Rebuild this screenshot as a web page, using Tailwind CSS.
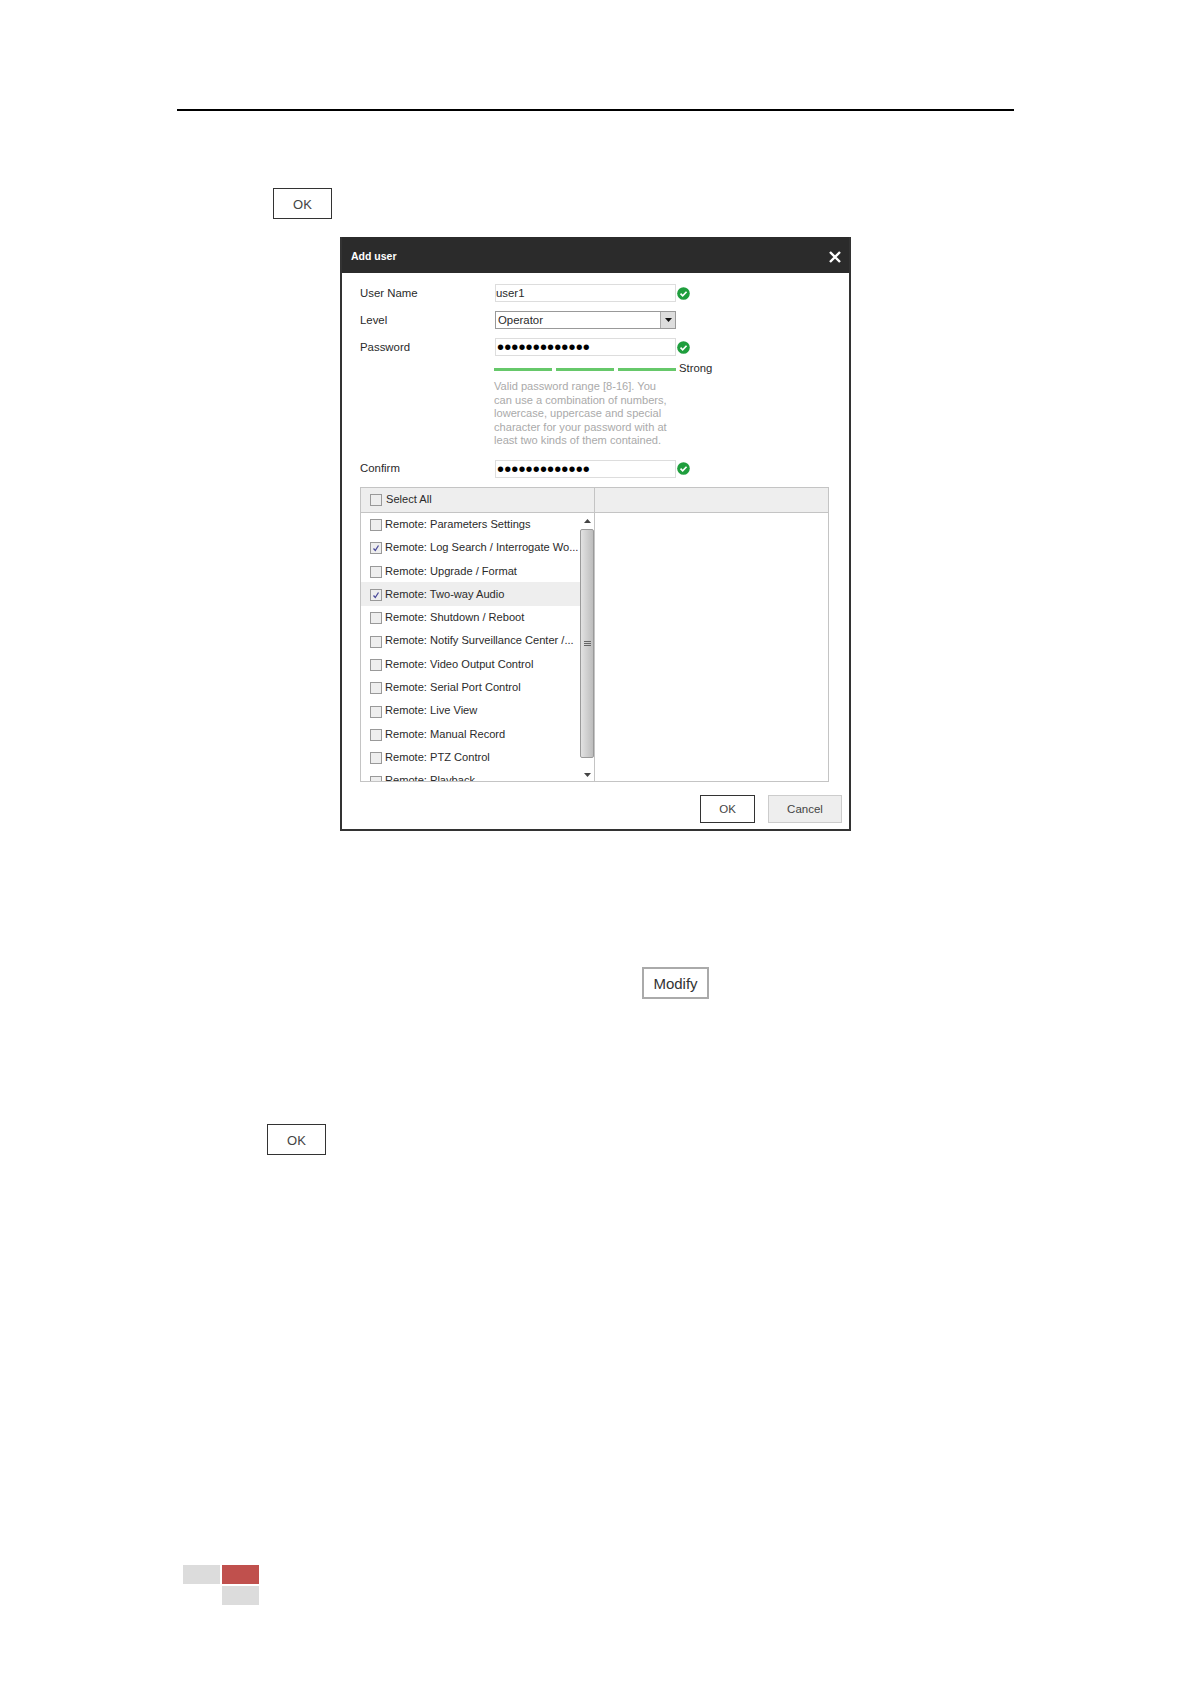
<!DOCTYPE html>
<html lang="en">
<head>
  <meta charset="UTF-8" />
  <title>Add user</title>
  <script src="https://cdn.jsdelivr.net/npm/@tailwindcss/browser@4"></script>
</head>
<body class="bg-white font-['Liberation_Sans',Arial,sans-serif] text-[#2a2a2a]">
  <div class="w-[1191px] h-[1684px] overflow-hidden pt-[109px]">
    <!-- header rule -->
    <div class="ml-[177px] w-[837px] h-[2px] bg-black"></div>

    <button class="block mt-[77px] ml-[273px] w-[59px] h-[31px] pt-[2px] border border-[#333] text-[13px] text-[#444]">OK</button>

    <!-- dialog -->
    <div class="mt-[18px] ml-[340px] w-[511px] h-[594px] border-2 border-[#333] border-t-0 bg-white">
      <div class="h-[36px] pt-[3px] bg-[#2b2b2b] flex items-center justify-between pl-[9px] pr-[8px]">
        <span class="text-[10.5px] font-bold text-white">Add user</span>
        <svg class="w-[12px] h-[12px]" viewBox="0 0 12 12" fill="none" stroke="#fff" stroke-width="2.4"><path d="M1 1l10 10M11 1L1 11" /></svg>
      </div>

      <div class="pl-[18px] pt-[11px]">
        <div class="flex items-center h-[18px] text-[11.4px]">
          <span class="w-[135px] pt-[2px]">User Name</span>
          <div class="w-[181px] h-[18px] border border-[#ddd] leading-[17px]">user1</div>
          <svg class="ml-[1px] w-[13px] h-[13px]" viewBox="0 0 14 14"><circle cx="7" cy="7" r="6.8" fill="#1f9e3d" /><path d="M3.8 7.2l2.3 2.3 4.2-4.4" fill="none" stroke="#fff" stroke-width="1.8" /></svg>
        </div>
        <div class="flex items-center h-[18px] mt-[9px] text-[11.4px]">
          <span class="w-[135px] pt-[2px]">Level</span>
          <div class="w-[181px] h-[18px] border border-[#999] flex items-center justify-between pl-[2px]">
            <span class="pt-[1px]">Operator</span>
            <span class="w-[15px] h-[16px] bg-[#ddd] border-l border-[#aaa] flex items-center justify-center">
              <svg class="w-[7px] h-[4px]" viewBox="0 0 7 4"><path d="M0 0h7L3.5 4z" fill="#111" /></svg>
            </span>
          </div>
        </div>
        <div class="flex items-center h-[18px] mt-[9px] text-[11.4px]">
          <span class="w-[135px] pt-[2px]">Password</span>
          <div class="w-[181px] h-[18px] border border-[#ddd] pl-[1px] text-[20px] leading-[16px] tracking-[0.15px] text-black">•••••••••••••</div>
          <svg class="ml-[1px] w-[13px] h-[13px]" viewBox="0 0 14 14"><circle cx="7" cy="7" r="6.8" fill="#1f9e3d" /><path d="M3.8 7.2l2.3 2.3 4.2-4.4" fill="none" stroke="#fff" stroke-width="1.8" /></svg>
        </div>

        <!-- strength meter -->
        <div class="flex items-center h-[14px] mt-[6px] ml-[134px] text-[11.3px]">
          <span class="w-[58px] h-[3px] bg-[#66c86a]"></span>
          <span class="w-[58px] h-[3px] bg-[#66c86a] ml-[4px]"></span>
          <span class="w-[58px] h-[3px] bg-[#66c86a] ml-[4px]"></span>
          <span class="ml-[3px] -mt-[1px]">Strong</span>
        </div>
        <p class="mt-[4px] ml-[134px] text-[11.1px] leading-[13.5px] text-[#aaa] whitespace-nowrap">Valid password range [8-16]. You<br />can use a combination of numbers,<br />lowercase, uppercase and special<br />character for your password with at<br />least two kinds of them contained.</p>

        <div class="flex items-center h-[18px] mt-[12px] text-[11.4px]">
          <span class="w-[135px]">Confirm</span>
          <div class="w-[181px] h-[18px] border border-[#ddd] pl-[1px] text-[20px] leading-[16px] tracking-[0.15px] text-black">•••••••••••••</div>
          <svg class="ml-[1px] w-[13px] h-[13px]" viewBox="0 0 14 14"><circle cx="7" cy="7" r="6.8" fill="#1f9e3d" /><path d="M3.8 7.2l2.3 2.3 4.2-4.4" fill="none" stroke="#fff" stroke-width="1.8" /></svg>
        </div>

        <!-- permissions table -->
        <div class="mt-[9px] w-[469px] h-[295px] border border-[#c4c4c4] text-[11.1px]">
          <div class="flex h-[25px] bg-[#eee] border-b border-[#c4c4c4]">
            <div class="w-[234px] border-r border-[#c4c4c4] flex items-center pl-[9px]">
              <span class="w-[12px] h-[12px] border border-[#999] bg-[#eee] mt-[1px]"></span>
              <span class="ml-[4px]">Select All</span>
            </div>
          </div>
          <div class="flex h-[268px]">
            <div id="rows" class="w-[219px] h-[268px] overflow-hidden"></div>
            <!-- scrollbar -->
            <div class="w-[14px] h-[268px] bg-white flex flex-col items-center">
              <svg class="w-[7px] h-[4px] mt-[6px]" viewBox="0 0 7 4"><path d="M0 4h7L3.5 0z" fill="#444" /></svg>
              <div class="mt-[6px] w-[14px] h-[229px] bg-linear-to-r from-[#e2e2e2] to-[#bdbdbd] border border-[#9a9a9a] rounded-[2px] flex flex-col items-center justify-center gap-[1px]">
                <span class="w-[7px] h-[1px] bg-[#666]"></span>
                <span class="w-[7px] h-[1px] bg-[#666]"></span>
                <span class="w-[7px] h-[1px] bg-[#666]"></span>
              </div>
              <svg class="w-[7px] h-[4px] mt-[15px]" viewBox="0 0 7 4"><path d="M0 0h7L3.5 4z" fill="#444" /></svg>
            </div>
            <div class="w-[234px] border-l border-[#c4c4c4]"></div>
          </div>
        </div>
      </div>

      <div class="flex justify-end gap-[13px] mt-[13px] pr-[7px] text-[11.5px] text-[#444]">
        <button class="w-[55px] h-[28px] pt-[2px] border border-[#333]">OK</button>
        <button class="w-[74px] h-[28px] pt-[2px] border border-[#ccc] bg-[#eee]">Cancel</button>
      </div>
    </div>

    <button class="block mt-[136px] ml-[642px] w-[67px] h-[32px] pt-[2px] border-2 border-[#aaa] text-[15px] text-[#333]">Modify</button>

    <button class="block mt-[125px] ml-[267px] w-[59px] h-[31px] pt-[2px] border border-[#333] text-[13px] text-[#444]">OK</button>

    <!-- footer blocks -->
    <div class="mt-[410px] ml-[183px] grid grid-cols-[37px_37px] grid-rows-[19px_19px] gap-[2px]">
      <div class="bg-[#dcdcdc]"></div>
      <div class="bg-[#c0504d]"></div>
      <div></div>
      <div class="bg-[#dcdcdc]"></div>
    </div>
  </div>

  <script>
    const permisos = [
      ["Remote: Parameters Settings", false],
      ["Remote: Log Search / Interrogate Wo...", true],
      ["Remote: Upgrade / Format", false],
      ["Remote: Two-way Audio", true, true],
      ["Remote: Shutdown / Reboot", false],
      ["Remote: Notify Surveillance Center /...", false],
      ["Remote: Video Output Control", false],
      ["Remote: Serial Port Control", false],
      ["Remote: Live View", false],
      ["Remote: Manual Record", false],
      ["Remote: PTZ Control", false],
      ["Remote: Playback", false]
    ];

    document.getElementById("rows").innerHTML = permisos.map(([nombre, marcado, activo]) => `
      <div class="h-[23.33px] flex items-center pl-[9px] whitespace-nowrap ${activo ? "bg-[#eee]" : ""}">
        <span class="w-[12px] h-[12px] border border-[#999] bg-[#eee] mt-[2px] flex items-center justify-center shrink-0">
          ${marcado ? '<svg class="w-[8px] h-[8px]" viewBox="0 0 8 8" fill="none" stroke="#4a4a9a" stroke-width="1.3"><path d="M1.5 4.5l1.8 2L6.5 1.5" /></svg>' : ""}
        </span>
        <span class="ml-[3px]">${nombre}</span>
      </div>
    `).join("");
  </script>
</body>
</html>
